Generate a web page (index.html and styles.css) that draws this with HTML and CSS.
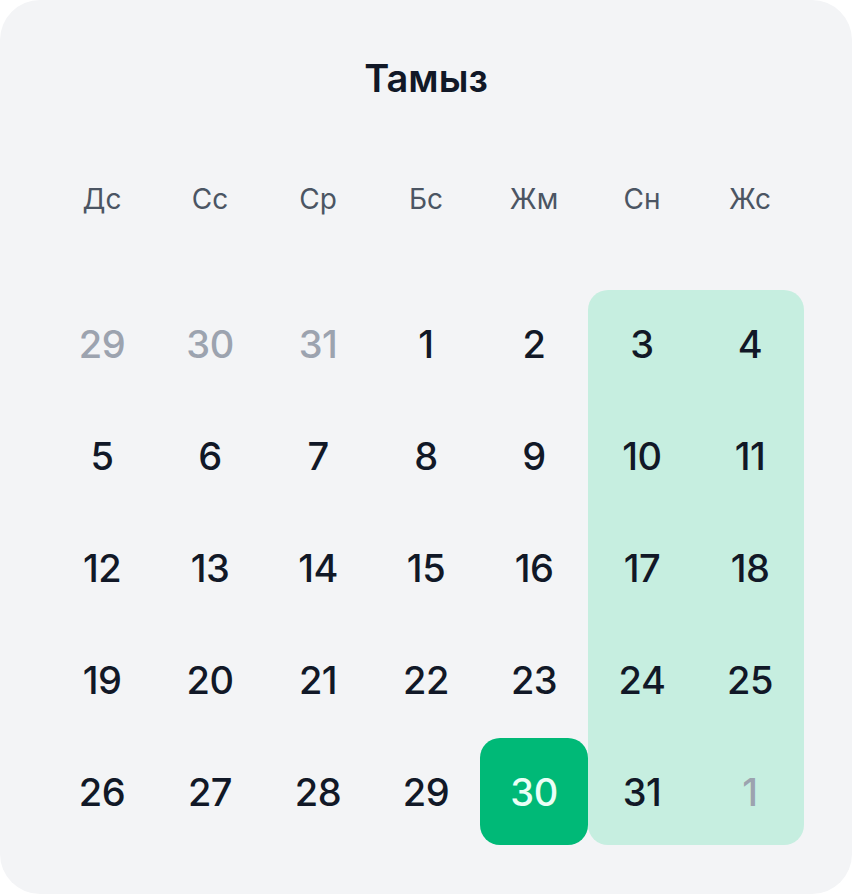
FILE: index.html
```html
<!DOCTYPE html>
<html lang="kk">
<head>
<meta charset="utf-8">
<link rel="stylesheet" href="styles.css">
</head>
<body>
<div class="card">
  <h1 class="title">Тамыз</h1>
  <div class="weekdays">
    <span>Дс</span><span>Сс</span><span>Ср</span><span>Бс</span><span>Жм</span><span>Сн</span><span>Жс</span>
  </div>
  <div class="grid">
    <div class="weekend-band"></div>
    <div class="day muted">29</div><div class="day muted">30</div><div class="day muted">31</div><div class="day">1</div><div class="day">2</div><div class="day">3</div><div class="day">4</div>
    <div class="day">5</div><div class="day">6</div><div class="day">7</div><div class="day">8</div><div class="day">9</div><div class="day">10</div><div class="day">11</div>
    <div class="day">12</div><div class="day">13</div><div class="day">14</div><div class="day">15</div><div class="day">16</div><div class="day">17</div><div class="day">18</div>
    <div class="day">19</div><div class="day">20</div><div class="day">21</div><div class="day">22</div><div class="day">23</div><div class="day">24</div><div class="day">25</div>
    <div class="day">26</div><div class="day">27</div><div class="day">28</div><div class="day">29</div><div class="day selected">30</div><div class="day">31</div><div class="day muted">1</div>
  </div>
</div>
</body>
</html>
```
FILE: styles.css
```css
html, body {
  margin: 0;
  padding: 0;
  background: #ffffff;
}
body {
  font-family: Inter, "Noto Sans", sans-serif;
  color: #111827;
}
.card {
  width: 852px;
  height: 894px;
  box-sizing: border-box;
  padding: 55px 48px 0;
  background: #f3f4f6;
  border-radius: 40px;
}
.title {
  margin: 0;
  height: 46px;
  line-height: 46px;
  font-size: 38px;
  font-weight: 600;
  text-align: center;
  color: #111827;
}
.weekdays {
  margin-top: 78px;
  display: grid;
  grid-template-columns: repeat(7, 108px);
  height: 40px;
  line-height: 40px;
  font-size: 28px;
  font-weight: 400;
  color: #4b5563;
  text-align: center;
}
.grid {
  position: relative;
  margin-top: 71px;
  display: grid;
  grid-template-columns: repeat(7, 108px);
  grid-auto-rows: 107px;
  row-gap: 5px;
}
.weekend-band {
  position: absolute;
  left: 540px;
  top: 0;
  width: 216px;
  bottom: 0;
  background: #c6eee0;
  border-radius: 20px;
}
.day {
  position: relative;
  display: flex;
  align-items: center;
  justify-content: center;
  font-size: 38px;
  font-weight: 500;
  color: #111827;
  letter-spacing: -0.5px;
}
.muted {
  color: #9ca3af;
}
.selected {
  background: #00b977;
  color: #eafff6;
  border-radius: 20px;
}
```
